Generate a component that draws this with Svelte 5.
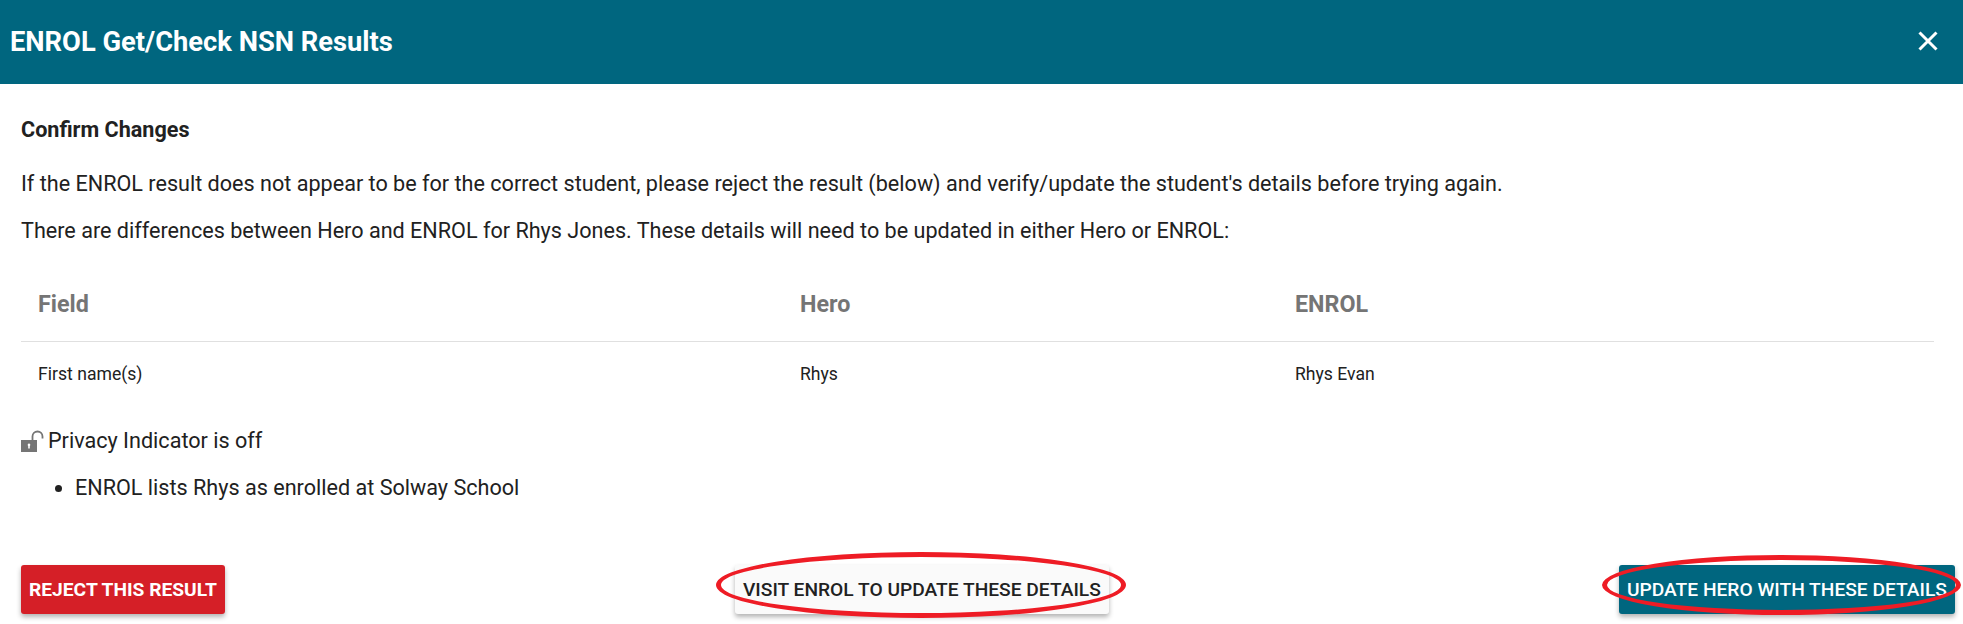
<script>
  const rows = [
    { field: "First name(s)", hero: "Rhys", enrol: "Rhys Evan" },
  ];
</script>

<div class="dialog">
  <header>
    <h1>ENROL Get/Check NSN Results</h1>
    <button class="close" aria-label="Close">
      <svg width="22" height="22" viewBox="0 0 22 22"><path d="M2.500 2.500l17 17M19.500 2.500l-17 17" stroke="#fff" stroke-width="3" /></svg>
    </button>
  </header>

  <main>
    <p class="lead">Confirm Changes</p>
    <p class="line">If the ENROL result does not appear to be for the correct student, please reject the result (below) and verify/update the student's details before trying again.</p>
    <p class="line">There are differences between Hero and ENROL for Rhys Jones. These details will need to be updated in either Hero or ENROL:</p>

    <table>
      <colgroup>
        <col class="c1" />
        <col class="c2" />
        <col />
      </colgroup>
      <thead>
        <tr>
          <th>Field</th>
          <th>Hero</th>
          <th>ENROL</th>
        </tr>
      </thead>
      <tbody>
        {#each rows as row}
          <tr>
            <td>{row.field}</td>
            <td>{row.hero}</td>
            <td>{row.enrol}</td>
          </tr>
        {/each}
      </tbody>
    </table>

    <p class="privacy">
      <svg width="24" height="22" viewBox="0 0 24 22">
        <path d="M0 10h16v12H0z" fill="#757575" />
        <path d="M8 13.500a1.400 1.400 0 0 1 .8 2.500v2.500H7.200v-2.500a1.400 1.400 0 0 1 .8-2.500z" fill="#fff" />
        <path d="M11.500 10V6.500a5 5 0 0 1 10 0v2" fill="none" stroke="#757575" stroke-width="1.800" />
      </svg>
      <span>Privacy Indicator is off</span>
    </p>
    <ul>
      <li>ENROL lists Rhys as enrolled at Solway School</li>
    </ul>

    <div class="actions">
      <button class="btn reject">Reject this result</button>
      <button class="btn visit">Visit ENROL to update these details<span class="ring ring-visit"></span></button>
      <button class="btn update">Update Hero with these details<span class="ring ring-update"></span></button>
    </div>
  </main>
</div>

<style>
  :global(body) {
    background: #fff;
  }
  .dialog {
    font-family: Roboto, sans-serif;
    color: #212121;
    overflow: hidden;
    height: 624px;
  }
  header {
    height: 84px;
    background: #00667f;
    color: #fff;
    display: flex;
    align-items: center;
    justify-content: space-between;
    padding: 0 24px 0 10px;
  }
  h1 {
    margin: 0;
    font-size: 27.300px;
    font-weight: 700;
  }
  .close {
    background: none;
    border: none;
    padding: 0;
    margin-bottom: 3px;
    display: flex;
  }
  main {
    padding: 34px 8px 0 21px;
  }
  p {
    margin: 0;
  }
  .lead {
    font-size: 21.600px;
    font-weight: 700;
    line-height: 24px;
    margin-bottom: 30px;
  }
  .line {
    font-size: 21.600px;
    line-height: 24px;
    margin-bottom: 23px;
  }
  .line + .line {
    margin-bottom: 0;
  }
  table {
    width: 1913px;
    border-collapse: collapse;
    table-layout: fixed;
    margin-top: 26px;
  }
  .c1 {
    width: 762px;
  }
  .c2 {
    width: 495px;
  }
  th {
    text-align: left;
    font-size: 23.300px;
    font-weight: 700;
    color: #757575;
    height: 70px;
    padding: 0 17px 2px;
    border-bottom: 1px solid #e0e0e0;
  }
  td {
    font-size: 17.600px;
    height: 64px;
    padding: 0 17px;
  }
  .privacy {
    display: flex;
    align-items: center;
    gap: 3px;
    font-size: 21.600px;
    line-height: 24px;
    margin-top: 23px;
  }
  .privacy svg {
    flex: none;
  }
  ul {
    margin: 23px 0 0;
    padding-left: 54px;
    font-size: 21.600px;
    line-height: 24px;
  }
  .actions {
    display: flex;
    justify-content: space-between;
    margin-top: 65px;
  }
  .btn {
    position: relative;
    height: 49px;
    border: none;
    border-radius: 3px;
    padding: 0 8px;
    font-family: inherit;
    font-size: 19.200px;
    font-weight: 500;
    text-transform: uppercase;
    box-shadow: 0 3px 5px rgba(0, 0, 0, 0.3);
  }
  .reject {
    background: #d51f27;
    color: #fff;
    font-weight: 700;
  }
  .visit {
    background: #fafafa;
    color: #212121;
  }
  .update {
    background: #00667f;
    color: #fff;
  }
  .ring {
    position: absolute;
    border: 5px solid #ee1c25;
    border-radius: 50%;
    box-sizing: border-box;
  }
  .ring-visit {
    left: -19px;
    right: -17px;
    top: -13px;
    bottom: -4px;
  }
  .ring-update {
    left: -17px;
    right: -6px;
    top: -10px;
    bottom: -1px;
  }
</style>
